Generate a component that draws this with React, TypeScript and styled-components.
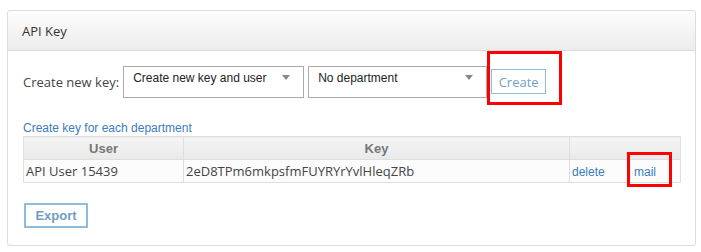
import React from 'react';
import styled, { createGlobalStyle, css } from 'styled-components';

const GlobalStyle = createGlobalStyle`
  body {
    margin: 0;
    background: #fff;
    font-family: 'Open Sans', 'Liberation Sans', sans-serif;
  }
`;

const Panel = styled.div`
  margin: 10px 0 0 7px;
  width: 687px;
  height: 234px;
  border: 1px solid #dcdcdc;
  border-radius: 3px;
  box-shadow: 0 1px 1px rgba(0, 0, 0, 0.04);
  background: #fff;
`;

const PanelHeader = styled.div`
  height: 39px;
  border-bottom: 1px solid #dcdcdc;
  background: linear-gradient(#fdfdfd, #ececec);
  padding-left: 14px;
  display: flex;
  align-items: center;
  font-size: 13px;
  color: #333;
  border-radius: 3px 3px 0 0;
`;

const PanelBody = styled.div`
  padding: 14px 14px 0 15px;
`;

const FormRow = styled.div`
  display: flex;
  align-items: flex-start;
`;

const Label = styled.span`
  font-size: 13px;
  color: #444;
  line-height: 32px;
  margin-right: 4px;
  margin-top: 1px;
`;

const FakeSelect = styled.div<{ $width: number }>`
  position: relative;
  box-sizing: border-box;
  width: ${(p) => p.$width}px;
  height: 32px;
  margin-top: 1px;
  margin-right: 4px;
  border: 1px solid #aaa;
  background: #fff;
  padding: 4px 0 0 9px;
  font-family: 'Liberation Sans', Arial, sans-serif;
  font-size: 12px;
  color: #222;
  line-height: 14px;
`;

const Caret = styled.span`
  position: absolute;
  top: 8px;
  right: 13px;
  width: 0;
  height: 0;
  border-left: 4px solid transparent;
  border-right: 4px solid transparent;
  border-top: 5px solid #888;
`;

type Mark = { $t: number; $r: number; $b: number; $l: number };

const redMark = css<Mark>`
  position: relative;
  &::after {
    content: '';
    position: absolute;
    top: ${(p) => p.$t}px;
    right: ${(p) => p.$r}px;
    bottom: ${(p) => p.$b}px;
    left: ${(p) => p.$l}px;
    border: 3px solid #f00;
    pointer-events: none;
  }
`;

const Marked = styled.div<Mark>`
  ${redMark}
`;

const OutlineButton = styled.button<{ $bold?: boolean }>`
  box-sizing: border-box;
  background: #fff;
  border: 1px solid #8fbcd9;
  color: ${(p) => (p.$bold ? '#6f9dc5' : '#6f9fc6')};
  font-family: ${(p) =>
    p.$bold ? "'Liberation Sans', Arial, sans-serif" : "'Open Sans', sans-serif"};
  font-weight: ${(p) => (p.$bold ? 700 : 400)};
  font-size: 13px;
  padding: 0;
  cursor: pointer;
`;

const CreateButton = styled(OutlineButton)`
  width: 55px;
  height: 25px;
  margin-top: 4px;
`;

const ExportButton = styled(OutlineButton)`
  width: 64px;
  height: 25px;
  margin: 20px 0 0 1px;
  border-width: 2px;
`;

const Link = styled.a`
  font-family: 'Liberation Sans', Arial, sans-serif;
  font-size: 12px;
  color: #3b7cbd;
  text-decoration: none;
  cursor: pointer;
`;

const DeptLink = styled(Link)`
  display: block;
  margin-top: 22px;
  line-height: 16px;
`;

const Table = styled.table`
  width: 657px;
  border-collapse: collapse;
  table-layout: fixed;
`;

const Th = styled.th`
  height: 22px;
  padding: 0;
  border: 1px solid #dedede;
  background: linear-gradient(#f5f5f5, #e9e9e9);
  font-family: 'Liberation Sans', Arial, sans-serif;
  font-weight: 700;
  font-size: 13px;
  color: #777;
  text-align: center;
`;

const Td = styled.td`
  height: 22px;
  padding: 0 0 0 2px;
  border: 1px solid #dedede;
  font-size: 13px;
  color: #444;
  background: #fcfcfc;
`;

const ActionTd = styled(Td)`
  padding-left: 2px;
`;

const MarkedTd = styled(ActionTd)<Mark>`
  padding-left: 4px;
  ${redMark}
`;

const columns = [160, 386, 60, 51];

export default function App() {
  return (
    <>
      <GlobalStyle />
      <Panel>
        <PanelHeader>API Key</PanelHeader>
        <PanelBody>
          <FormRow>
            <Label>Create new key:</Label>
            <FakeSelect $width={181}>
              Create new key and user
              <Caret />
            </FakeSelect>
            <FakeSelect $width={179}>
              No department
              <Caret />
            </FakeSelect>
            <Marked $t={-14} $r={-16} $b={-11} $l={-4}>
              <CreateButton>Create</CreateButton>
            </Marked>
          </FormRow>
          <DeptLink>Create key for each department</DeptLink>
          <Table>
            <colgroup>
              {columns.map((w, i) => (
                <col key={i} style={{ width: w }} />
              ))}
            </colgroup>
            <thead>
              <tr>
                <Th>User</Th>
                <Th>Key</Th>
                <Th colSpan={2}></Th>
              </tr>
            </thead>
            <tbody>
              <tr>
                <Td>API User 15439</Td>
                <Td>2eD8TPm6mkpsfmFUYRYrYvlHleqZRb</Td>
                <ActionTd>
                  <Link>delete</Link>
                </ActionTd>
                <MarkedTd $t={-8} $r={8} $b={-5} $l={-3}>
                  <Link>mail</Link>
                </MarkedTd>
              </tr>
            </tbody>
          </Table>
          <ExportButton $bold>Export</ExportButton>
        </PanelBody>
      </Panel>
    </>
  );
}
